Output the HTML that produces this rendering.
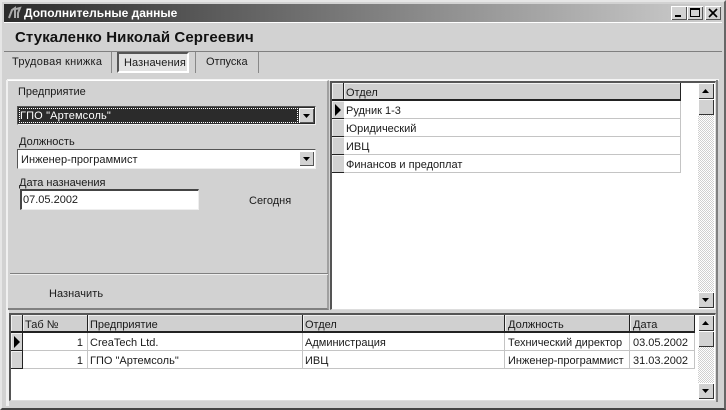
<!DOCTYPE html>
<html><head><meta charset="utf-8"><style>
html,body{margin:0;padding:0}
body{width:726px;height:410px;position:relative;overflow:hidden;background:#d2d2d2;font:11px/15px "Liberation Sans",sans-serif;color:#1a1a1a}
div,span{position:absolute;box-sizing:border-box;white-space:nowrap}
.r{box-shadow:inset 1px 1px 0 #fff,inset -1px -1px 0 #555;background:#d2d2d2}
.h{height:18px;background:#d0d0d0;border-right:1px solid #222;border-bottom:2px solid #222;box-shadow:inset 1px 1px 0 #f0f0f0;padding:3px 0 0 4px}
.c{height:18px;border-right:1px solid #c4c4c4;border-bottom:1px solid #c4c4c4;background:#fff;padding:3px 0 0 3px}
.i{width:13px;height:18px;background:#d2d2d2;border-right:1px solid #222;border-bottom:1px solid #222;box-shadow:inset 1px 1px 0 #f0f0f0}
.b{width:16px;height:16px;background:#d2d2d2;box-shadow:inset 1px 1px 0 #fff,inset -1px -1px 0 #333}
.sb{background-color:#e8e8e8;background-image:repeating-conic-gradient(#d0d0d0 0 25%,#fff 0 50%);background-size:2px 2px}
</style></head><body>
<div style="left:0;top:0;width:726px;height:410px;border:2px solid #e6e6e6;border-right-color:#666;border-bottom-color:#444"></div>
<div style="left:4px;top:4px;width:718px;height:18px;background:linear-gradient(90deg,#2b2b2b,#cfcfcf)"></div>
<svg style="position:absolute;left:6px;top:5px" width="16" height="16"><path d="M3 13L6 5L9 3L9 13M10 4L14 3L12 8L12 13" stroke="#aaa" stroke-width="2" fill="none"/></svg>
<div style="left:24px;top:6px;color:#fff;font-weight:bold;font-size:12px">Дополнительные данные</div>
<div class="r" style="left:671px;top:6px;width:16px;height:14px"><div style="left:4px;top:9px;width:6px;height:2px;background:#000"></div></div>
<div class="r" style="left:687px;top:6px;width:16px;height:14px"><div style="left:3px;top:2px;width:10px;height:9px;border:1px solid #000;border-top-width:2px"></div></div>
<div class="r" style="left:705px;top:6px;width:16px;height:14px"><svg style="position:absolute;left:3px;top:2px" width="10" height="10"><path d="M1 1L9 9M9 1L1 9" stroke="#000" stroke-width="1.7"/></svg></div>

<div style="left:4px;top:22px;width:718px;height:30px;border-top:1px solid #fff;border-bottom:1px solid #808080"></div>
<div style="left:15px;top:29px;font:bold 15px/18px 'Liberation Sans',sans-serif;letter-spacing:.1px;color:#111">Стукаленко Николай Сергеевич</div>

<div style="left:12px;top:55px;letter-spacing:.27px">Трудовая книжка</div>
<div style="left:111px;top:52px;width:1px;height:21px;background:#888"></div>
<div style="left:117px;top:52px;width:72px;height:21px;background:#e2e2e2;border:2px solid #555;border-right-color:#fff;border-bottom-color:#fff"></div>
<div style="left:124px;top:56px;letter-spacing:.1px">Назначения</div>
<div style="left:195px;top:52px;width:1px;height:21px;background:#888"></div>
<div style="left:206px;top:55px">Отпуска</div>
<div style="left:258px;top:52px;width:1px;height:21px;background:#888"></div>

<div style="left:7px;top:79px;width:712px;height:2px;background:#f4f4f4"></div>
<div style="left:6px;top:80px;width:3px;height:326px;background:#f0f0f0"></div>
<div style="left:716px;top:80px;width:2px;height:322px;background:#808080"></div>
<div style="left:8px;top:80px;width:321px;height:230px;background:#d2d2d2;border-right:2px solid #a0a0a0;border-bottom:2px solid #808080;border-top:1px solid #fff"></div>

<div style="left:18px;top:85px">Предприятие</div>
<div style="left:17px;top:106px;width:299px;height:19px;background:#2b2b2b;border:1px solid #555;border-right-color:#eee;border-bottom-color:#eee"></div>
<div style="left:19px;top:108px;width:279px;height:15px;border:1px dotted #fff;color:#fff;line-height:14px;letter-spacing:.15px">ГПО "Артемсоль"</div>
<div class="r" style="left:299px;top:108px;width:15px;height:15px"><svg style="position:absolute;left:4px;top:6px" width="7" height="4"><path d="M0 0H7L3.500 4Z" fill="#000"/></svg></div>

<div style="left:19px;top:135px">Должность</div>
<div style="left:17px;top:149px;width:299px;height:20px;background:#fff;border:1px solid #555;border-right-color:#eee;border-bottom-color:#eee"></div>
<div style="left:21px;top:153px;letter-spacing:.05px">Инженер-программист</div>
<div class="r" style="left:299px;top:151px;width:15px;height:15px"><svg style="position:absolute;left:4px;top:6px" width="7" height="4"><path d="M0 0H7L3.500 4Z" fill="#000"/></svg></div>

<div style="left:19px;top:176px">Дата назначения</div>
<div style="left:20px;top:189px;width:179px;height:21px;background:#fff;border:2px solid #444;border-right:1px solid #eee;border-bottom:1px solid #eee"></div>
<div style="left:23px;top:193px">07.05.2002</div>
<div style="left:249px;top:194px">Сегодня</div>
<div style="left:10px;top:273px;width:318px;height:1px;background:#808080"></div>
<div style="left:10px;top:274px;width:318px;height:1px;background:#eee"></div>
<div style="left:49px;top:287px;letter-spacing:.06px">Назначить</div>

<!-- right grid -->
<div style="left:330px;top:81px;width:386px;height:229px;background:#fff;border:2px solid #555;border-right:1px solid #ddd;border-bottom:1px solid #ddd"></div>
<div class="h" style="left:332px;top:83px;width:12px;border-right:1px solid #222"></div>
<div class="h" style="left:344px;top:83px;width:337px;padding-left:2px">Отдел</div>
<div class="i" style="left:332px;top:101px"><svg style="position:absolute;left:2px;top:3px" width="8" height="12"><path d="M1 0L7 6L1 12Z" fill="#000"/></svg></div>
<div class="c" style="left:344px;top:101px;width:337px;padding-left:2px">Рудник 1-3</div>
<div class="i" style="left:332px;top:119px"></div>
<div class="c" style="left:344px;top:119px;width:337px;padding-left:2px">Юридический</div>
<div class="i" style="left:332px;top:137px"></div>
<div class="c" style="left:344px;top:137px;width:337px;padding-left:2px">ИВЦ</div>
<div class="i" style="left:332px;top:155px"></div>
<div class="c" style="left:344px;top:155px;width:337px;padding-left:2px">Финансов и предоплат</div>
<div class="sb" style="left:698px;top:83px;width:16px;height:225px"></div>
<div class="b" style="left:698px;top:83px"><svg style="position:absolute;left:4px;top:6px" width="7" height="4"><path d="M0 4H7L3.500 0Z" fill="#000"/></svg></div>
<div class="b" style="left:698px;top:99px"></div>
<div class="b" style="left:698px;top:292px"><svg style="position:absolute;left:4px;top:6px" width="7" height="4"><path d="M0 0H7L3.500 4Z" fill="#000"/></svg></div>

<!-- bottom grid -->
<div style="left:9px;top:313px;width:707px;height:88px;background:#fff;border:2px solid #555;border-right:1px solid #ddd;border-bottom:1px solid #ddd"></div>
<div class="h" style="left:11px;top:315px;width:12px"></div>
<div class="h" style="left:23px;top:315px;width:65px;padding-left:2px">Таб №</div>
<div class="h" style="left:88px;top:315px;width:215px;padding-left:2px">Предприятие</div>
<div class="h" style="left:303px;top:315px;width:202px;padding-left:2px">Отдел</div>
<div class="h" style="left:505px;top:315px;width:125px;padding-left:3px">Должность</div>
<div class="h" style="left:630px;top:315px;width:65px;padding-left:3px">Дата</div>

<div class="i" style="left:11px;top:333px;width:12px"><svg style="position:absolute;left:2px;top:3px" width="8" height="12"><path d="M1 0L7 6L1 12Z" fill="#000"/></svg></div>
<div class="c" style="left:23px;top:333px;width:65px;text-align:right;padding-right:4px">1</div>
<div class="c" style="left:88px;top:333px;width:215px;padding-left:2px">CreaTech Ltd.</div>
<div class="c" style="left:303px;top:333px;width:202px;padding-left:2px">Администрация</div>
<div class="c" style="left:505px;top:333px;width:125px;padding-left:3px">Технический директор</div>
<div class="c" style="left:630px;top:333px;width:65px;padding-left:3px">03.05.2002</div>

<div class="i" style="left:11px;top:351px;width:12px"></div>
<div class="c" style="left:23px;top:351px;width:65px;text-align:right;padding-right:4px">1</div>
<div class="c" style="left:88px;top:351px;width:215px;padding-left:2px">ГПО "Артемсоль"</div>
<div class="c" style="left:303px;top:351px;width:202px;padding-left:2px">ИВЦ</div>
<div class="c" style="left:505px;top:351px;width:125px;padding-left:3px">Инженер-программист</div>
<div class="c" style="left:630px;top:351px;width:65px;padding-left:3px">31.03.2002</div>

<div class="sb" style="left:698px;top:315px;width:16px;height:84px"></div>
<div class="b" style="left:698px;top:315px"><svg style="position:absolute;left:4px;top:6px" width="7" height="4"><path d="M0 4H7L3.500 0Z" fill="#000"/></svg></div>
<div class="b" style="left:698px;top:331px"></div>
<div class="b" style="left:698px;top:383px"><svg style="position:absolute;left:4px;top:6px" width="7" height="4"><path d="M0 0H7L3.500 4Z" fill="#000"/></svg></div>
</body></html>
